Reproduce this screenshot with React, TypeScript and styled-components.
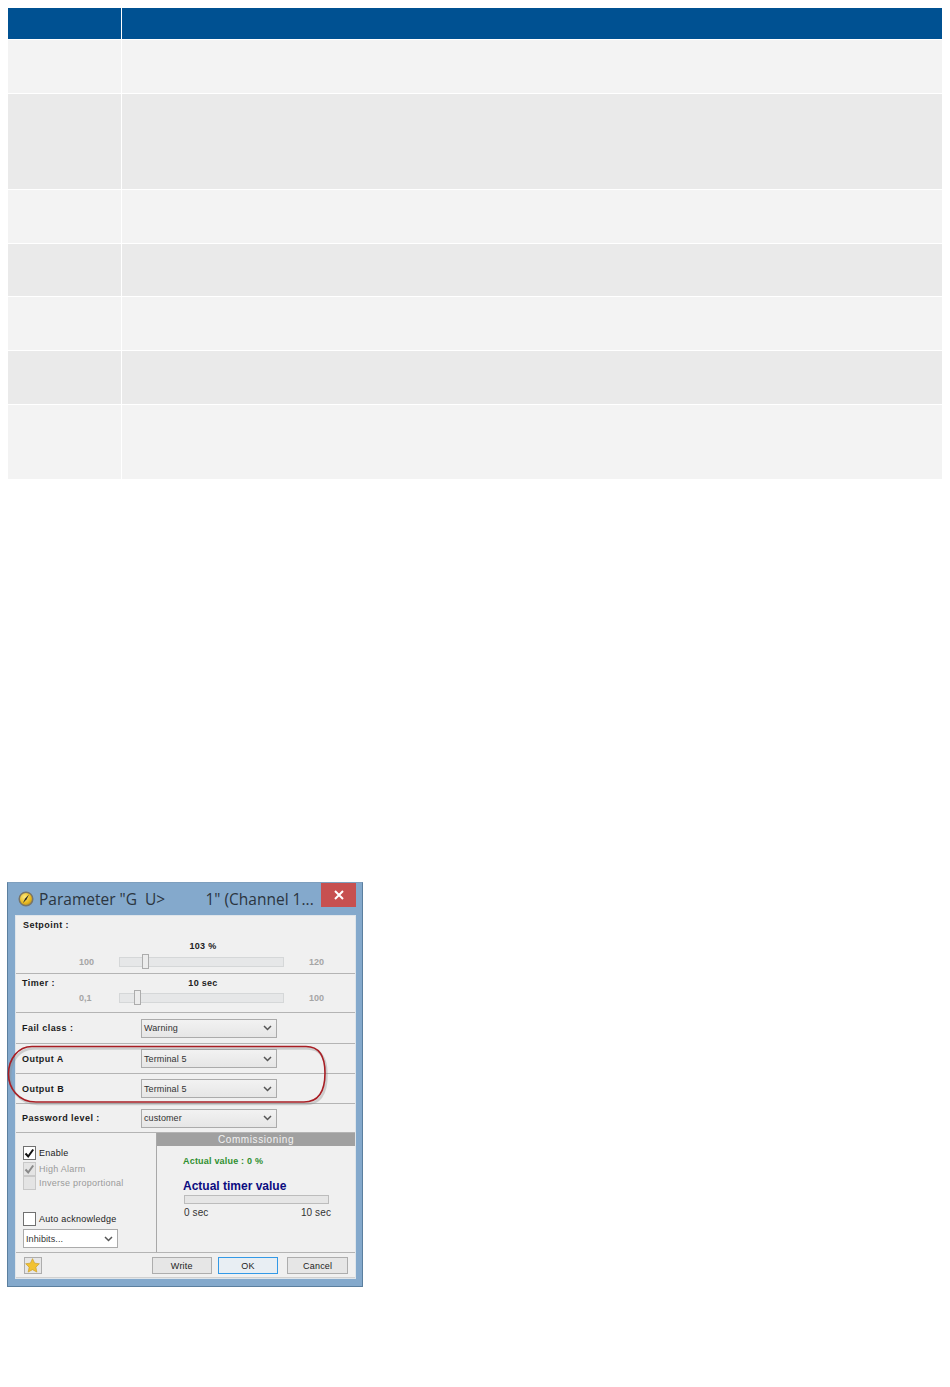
import React from "react";
import styled, { createGlobalStyle } from "styled-components";

const GlobalStyle = createGlobalStyle`
  html, body {
    margin: 0;
    padding: 0;
    background: #fff;
    font-family: "Liberation Sans", Arial, sans-serif;
  }
`;

const Page = styled.div`
  width: 950px;
  height: 1387px;
  padding: 8px 8px 0 8px;
  box-sizing: border-box;
  overflow: hidden;
`;

const Table = styled.div`
  width: 934px;
  display: flex;
  flex-direction: column;
  gap: 1px;
`;

const TableRow = styled.div<{ $h: number }>`
  display: grid;
  grid-template-columns: 113px 820px;
  column-gap: 1px;
  height: ${(p) => p.$h}px;
`;

const Cell = styled.div<{ $bg: string }>`
  background: ${(p) => p.$bg};
`;

const Dialog = styled.div`
  position: relative;
  margin: 403px 0 0 -1px;
  width: 356px;
  height: 405px;
  box-sizing: border-box;
  background: #84a9cc;
  border: 1px solid #5b7f9f;
  border-top-color: #7e9fbe;
  padding: 0 6px 7px 7px;
  display: flex;
  flex-direction: column;
`;

const TitleBar = styled.div`
  height: 32px;
  display: flex;
  align-items: center;
  padding-left: 3px;
  gap: 5px;
  flex: none;
`;

const TitleText = styled.span`
  font-family: "Open Sans", "Noto Sans", sans-serif;
  font-size: 15.5px;
  color: #2b3540;
  white-space: pre;
`;

const CloseButton = styled.div`
  position: absolute;
  top: 0;
  right: 6px;
  width: 35px;
  height: 24px;
  background: #c75050;
  display: flex;
  align-items: center;
  justify-content: center;
`;

const Client = styled.div`
  flex: 1;
  background: #f0f0f0;
  border: 1px solid #dfe5ea;
  display: flex;
  flex-direction: column;
  min-height: 0;
`;

const Section = styled.div<{ $h: number }>`
  height: ${(p) => p.$h}px;
  flex: none;
  box-sizing: border-box;
  border-bottom: 1px solid #b4b4b4;
  display: flex;
  flex-direction: column;
`;

const Label = styled.div<{ $pt?: number }>`
  font-size: 9px;
  font-weight: bold;
  line-height: 11px;
  color: #1a1a1a;
  letter-spacing: 0.45px;
  padding-top: ${(p) => p.$pt ?? 0}px;
`;

const SetpointTop = styled.div`
  padding: 4px 0 0 7px;
  height: 22px;
  box-sizing: border-box;
`;

const ValueLine = styled.div<{ $pt: number }>`
  display: grid;
  grid-template-columns: 103px 165px;
  padding-top: ${(p) => p.$pt}px;
`;

const LabelCell = styled.div`
  padding-left: 6px;
`;

const CenterValue = styled.div`
  text-align: center;
  font-size: 9px;
  font-weight: bold;
  line-height: 11px;
  color: #222;
  letter-spacing: 0.3px;
  padding-left: 3px;
`;

const SliderLine = styled.div<{ $pt: number }>`
  display: grid;
  grid-template-columns: 103px 165px 1fr;
  align-items: center;
  padding-top: ${(p) => p.$pt}px;
`;

const RangeMin = styled.span`
  font-size: 9px;
  line-height: 10px;
  font-weight: bold;
  color: #a5a5a5;
  padding-left: 63px;
`;

const RangeMax = styled.span`
  font-size: 9px;
  line-height: 10px;
  font-weight: bold;
  color: #a5a5a5;
  padding-left: 25px;
`;

const Track = styled.div`
  height: 10px;
  box-sizing: border-box;
  background: #e6e7e8;
  border: 1px solid #d5d7d8;
  position: relative;
`;

const Thumb = styled.div<{ $left: number }>`
  position: absolute;
  left: ${(p) => p.$left}px;
  top: -4px;
  width: 7px;
  height: 15px;
  box-sizing: border-box;
  background: #ececec;
  border: 1px solid #acacac;
`;

const FieldRow = styled.div`
  flex: 1;
  display: grid;
  grid-template-columns: 119px 136px;
  align-items: center;
  padding-left: 6px;
`;

const Combo = styled.div<{ $w?: number; $white?: boolean }>`
  height: 19px;
  width: ${(p) => p.$w ?? 136}px;
  box-sizing: border-box;
  border: 1px solid #ababab;
  background: ${(p) => (p.$white ? "#fff" : "linear-gradient(#f2f2f2, #e6e6e6)")};
  display: flex;
  align-items: center;
  justify-content: space-between;
  padding: 0 4px 0 2px;
  font-size: 9px;
  color: #333;
  letter-spacing: 0.1px;
`;

const Overlay = styled.svg`
  position: absolute;
  left: 0;
  top: 0;
  overflow: visible;
  pointer-events: none;
`;

const BottomArea = styled.div`
  height: 120px;
  flex: none;
  display: grid;
  grid-template-columns: 141px 1fr;
  border-bottom: 1px solid #b4b4b4;
  box-sizing: border-box;
`;

const LeftPane = styled.div`
  border-right: 1px solid #a8a8a8;
  padding: 13px 0 0 7px;
  display: flex;
  flex-direction: column;
`;

const CheckRow = styled.div<{ $mt?: number; $disabled?: boolean }>`
  display: flex;
  align-items: center;
  gap: 3px;
  height: 14px;
  margin-top: ${(p) => p.$mt ?? 0}px;
  font-size: 9px;
  letter-spacing: 0.25px;
  color: ${(p) => (p.$disabled ? "#9a9a9a" : "#222")};
`;

const CheckBox = styled.div<{ $disabled?: boolean }>`
  width: 13px;
  height: 14px;
  box-sizing: border-box;
  flex: none;
  background: ${(p) => (p.$disabled ? "#e4e4e4" : "#fff")};
  border: 1px solid ${(p) => (p.$disabled ? "#c8c8c8" : "#707070")};
  display: flex;
  align-items: center;
  justify-content: center;
`;

const InhibitWrap = styled.div`
  margin-top: 3px;
`;

const RightPane = styled.div`
  display: flex;
  flex-direction: column;
`;

const PaneHeader = styled.div`
  height: 13px;
  background: #a0a0a0;
  color: #f2f2f2;
  font-size: 10px;
  line-height: 13px;
  text-align: center;
  letter-spacing: 0.6px;
`;

const PaneBody = styled.div`
  padding: 10px 0 0 26px;
  display: flex;
  flex-direction: column;
`;

const ActualValue = styled.div`
  font-size: 9px;
  font-weight: bold;
  line-height: 11px;
  color: #2f8f2f;
  letter-spacing: 0.2px;
`;

const TimerTitle = styled.div`
  margin-top: 12px;
  font-size: 12px;
  font-weight: bold;
  line-height: 14px;
  color: #0b0b80;
`;

const ProgressBar = styled.div`
  margin: 2px 0 0 1px;
  width: 145px;
  height: 9px;
  box-sizing: border-box;
  background: #e6e6e6;
  border: 1px solid #bcbcbc;
`;

const ProgressLabels = styled.div`
  margin: 3px 0 0 1px;
  width: 147px;
  display: flex;
  justify-content: space-between;
  font-size: 10px;
  line-height: 11px;
  letter-spacing: 0.1px;
  color: #333;
`;

const Footer = styled.div`
  flex: 1;
  display: flex;
  align-items: center;
  padding: 0 7px 0 8px;
  border-bottom: 1px solid #d0d0d0;
`;

const StarButton = styled.div`
  width: 18px;
  height: 17px;
  box-sizing: border-box;
  border: 1px solid #adadad;
  background: #e6e6e6;
  display: flex;
  align-items: center;
  justify-content: center;
  margin-right: 110px;
`;

const FootButton = styled.div<{ $w: number; $primary?: boolean; $ml?: number; $mt?: number }>`
  width: ${(p) => p.$w}px;
  height: 17px;
  box-sizing: border-box;
  margin-left: ${(p) => p.$ml ?? 0}px;
  margin-top: ${(p) => p.$mt ?? 0}px;
  border: 1px solid ${(p) => (p.$primary ? "#3399e6" : "#adadad")};
  background: ${(p) => (p.$primary ? "#e8eef3" : "#e6e6e6")};
  font-size: 9px;
  line-height: 16px;
  text-align: center;
  color: #222;
  letter-spacing: 0.2px;
`;

const Chevron = () => (
  <svg width="9" height="6" viewBox="0 0 9 6" fill="none">
    <path d="M1 1 L4.5 4.5 L8 1" stroke="#555" strokeWidth="1.5" />
  </svg>
);

const rows = [
  { h: 53, bg: "#f3f3f3" },
  { h: 95, bg: "#eaeaea" },
  { h: 53, bg: "#f3f3f3" },
  { h: 52, bg: "#eaeaea" },
  { h: 53, bg: "#f3f3f3" },
  { h: 53, bg: "#eaeaea" },
  { h: 74, bg: "#f3f3f3" },
];

const ringPath =
  "M24 163.5 L298 163.5 C312 163.5 317 175 317 190 C317 206 312 219 296 219 L28 219 C10 219 0.5 205 0.5 191 C0.5 176 10 163.5 24 163.5 Z";

export default function App() {
  return (
    <Page>
      <GlobalStyle />
      <Table>
        <TableRow $h={31}>
          <Cell $bg="#005192" />
          <Cell $bg="#005192" />
        </TableRow>
        {rows.map((r, i) => (
          <TableRow $h={r.h} key={i}>
            <Cell $bg={r.bg} />
            <Cell $bg={r.bg} />
          </TableRow>
        ))}
      </Table>

      <Dialog>
        <TitleBar>
          <svg width="16" height="16" viewBox="0 0 16 16">
            <defs>
              <radialGradient id="ball" cx="0.4" cy="0.35" r="0.7">
                <stop offset="0" stopColor="#fbe97f" />
                <stop offset="0.65" stopColor="#e8b71c" />
                <stop offset="1" stopColor="#a98a2c" />
              </radialGradient>
            </defs>
            <circle cx="8" cy="8" r="6.8" fill="url(#ball)" stroke="#77756a" strokeWidth="1.5" />
            <path d="M11 3.6 L8.6 8.2 L4.8 12.2 L7.2 7.4 Z" fill="#222" />
          </svg>
          <TitleText>{'Parameter "G  U>          1" (Channel 1...'}</TitleText>
        </TitleBar>
        <CloseButton>
          <svg width="10" height="10" viewBox="0 0 10 10">
            <path d="M1 1 L9 9 M9 1 L1 9" stroke="#fff" strokeWidth="2" />
          </svg>
        </CloseButton>

        <Client>
          <Section $h={58}>
            <SetpointTop>
              <Label>Setpoint :</Label>
            </SetpointTop>
            <ValueLine $pt={3}>
              <span />
              <CenterValue>103 %</CenterValue>
            </ValueLine>
            <SliderLine $pt={5}>
              <RangeMin>100</RangeMin>
              <Track>
                <Thumb $left={22} />
              </Track>
              <RangeMax>120</RangeMax>
            </SliderLine>
          </Section>

          <Section $h={39}>
            <ValueLine $pt={4}>
              <LabelCell>
                <Label>Timer :</Label>
              </LabelCell>
              <CenterValue>10 sec</CenterValue>
            </ValueLine>
            <SliderLine $pt={4}>
              <RangeMin>0,1</RangeMin>
              <Track>
                <Thumb $left={14} />
              </Track>
              <RangeMax>100</RangeMax>
            </SliderLine>
          </Section>

          <Section $h={31}>
            <FieldRow>
              <Label>Fail class :</Label>
              <Combo>
                Warning
                <Chevron />
              </Combo>
            </FieldRow>
          </Section>
          <Section $h={30}>
            <FieldRow>
              <Label $pt={2}>Output A</Label>
              <Combo>
                Terminal 5
                <Chevron />
              </Combo>
            </FieldRow>
          </Section>
          <Section $h={30}>
            <FieldRow>
              <Label $pt={2}>Output B</Label>
              <Combo>
                Terminal 5
                <Chevron />
              </Combo>
            </FieldRow>
          </Section>
          <Section $h={29}>
            <FieldRow>
              <Label>Password level :</Label>
              <Combo>
                customer
                <Chevron />
              </Combo>
            </FieldRow>
          </Section>

          <BottomArea>
            <LeftPane>
              <CheckRow>
                <CheckBox>
                  <svg width="11" height="11" viewBox="0 0 11 11" fill="none">
                    <path d="M1.5 5.5 L4.2 8.5 L9.2 1.5" stroke="#111" strokeWidth="2" />
                  </svg>
                </CheckBox>
                Enable
              </CheckRow>
              <CheckRow $mt={2} $disabled>
                <CheckBox $disabled>
                  <svg width="11" height="11" viewBox="0 0 11 11" fill="none">
                    <path d="M1.5 5.5 L4.2 8.5 L9.2 1.5" stroke="#8a8a8a" strokeWidth="2" />
                  </svg>
                </CheckBox>
                High Alarm
              </CheckRow>
              <CheckRow $disabled>
                <CheckBox $disabled />
                Inverse proportional
              </CheckRow>
              <CheckRow $mt={22}>
                <CheckBox />
                Auto acknowledge
              </CheckRow>
              <InhibitWrap>
                <Combo $w={95} $white>
                  Inhibits...
                  <Chevron />
                </Combo>
              </InhibitWrap>
            </LeftPane>
            <RightPane>
              <PaneHeader>Commissioning</PaneHeader>
              <PaneBody>
                <ActualValue>Actual value : 0 %</ActualValue>
                <TimerTitle>Actual timer value</TimerTitle>
                <ProgressBar />
                <ProgressLabels>
                  <span>0 sec</span>
                  <span>10 sec</span>
                </ProgressLabels>
              </PaneBody>
            </RightPane>
          </BottomArea>

          <Footer>
            <StarButton>
              <svg width="15" height="15" viewBox="0 0 24 24">
                <path
                  d="M12 1 L15.4 8.2 L23 9.2 L17.4 14.6 L18.9 22.5 L12 18.6 L5.1 22.5 L6.6 14.6 L1 9.2 L8.6 8.2 Z"
                  fill="#f2c230"
                  stroke="#c99a20"
                />
              </svg>
            </StarButton>
            <FootButton $w={60}>Write</FootButton>
            <FootButton $w={61} $primary $ml={6} $mt={1}>OK</FootButton>
            <FootButton $w={61} $ml={9} $mt={1}>Cancel</FootButton>
          </Footer>
        </Client>

        <Overlay width="356" height="405" viewBox="0 0 356 405">
          <path d={ringPath} transform="translate(1.5 2)" fill="none" stroke="#8a8a8a" strokeOpacity="0.35" strokeWidth="2.5" />
          <path d={ringPath} fill="none" stroke="#a81e24" strokeWidth="1.6" />
        </Overlay>
      </Dialog>
    </Page>
  );
}
